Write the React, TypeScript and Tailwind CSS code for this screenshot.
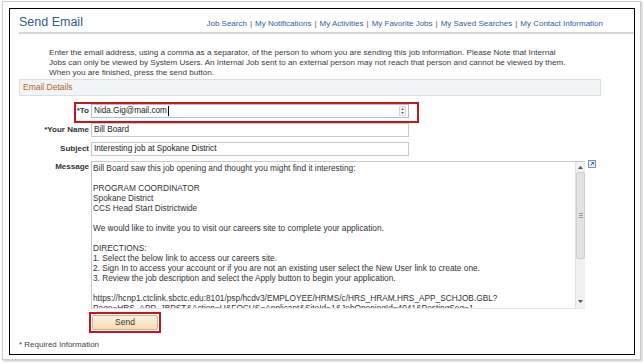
const links = [
  "Job Search",
  "My Notifications",
  "My Activities",
  "My Favorite Jobs",
  "My Saved Searches",
  "My Contact Information",
];

const message = `Bill Board saw this job opening and thought you might find it interesting:

PROGRAM COORDINATOR
Spokane District
CCS Head Start Districtwide

We would like to invite you to visit our careers site to complete your application.

DIRECTIONS:
1. Select the below link to access our careers site.
2. Sign In to access your account or if you are not an existing user select the New User link to create one.
3. Review the job description and select the Apply button to begin your application.

https://hcnp1.ctclink.sbctc.edu:8101/psp/hcdv3/EMPLOYEE/HRMS/c/HRS_HRAM.HRS_APP_SCHJOB.GBL?
Page=HRS_APP_JBPST&Action=U&FOCUS=Applicant&SiteId=1&JobOpeningId=4041&PostingSeq=1`;

const Label = ({ children }: { children: React.ReactNode }) => (
  <div className="text-right text-[8px] font-bold text-[#333] leading-[14px]">{children}</div>
);

const App = () => {
  return (
    <div className="w-[643px] h-[364px] bg-white font-['Liberation_Sans',Arial,sans-serif] overflow-hidden">
      <div className="ml-[2px] mt-[1px] w-[639px] h-[359px] border border-[#cdcdcd] shadow-[1px_1px_2px_rgba(0,0,0,0.25)] pl-[6px] pt-[6px]">
        <div className="w-[626px] h-[347px] border border-black">
          {/* header */}
          <div className="ml-[9px] h-[25px] pt-[6px] flex items-baseline justify-between pr-[31px] border-b-2 border-[#d6d6d6]">
            <h1 className="text-[12.5px] leading-[15px] text-[#36598f]">Send Email</h1>
            <div className="text-[8px] text-[#2f5ea8] flex items-baseline">
              {links.map((l, i) => (
                <span key={l}>
                  {i > 0 && <span className="mx-[3px] text-[#555]">|</span>}
                  {l}
                </span>
              ))}
            </div>
          </div>

          {/* intro */}
          <p className="mt-[14px] pl-[39px] pr-[62px] text-[8.1px] leading-[10px] text-[#3a3a3a]">
            Enter the email address, using a comma as a separator, of the person to whom you are sending this job
            information. Please Note that Internal Jobs can only be viewed by System Users. An Internal Job sent to an
            external person may not reach that person and cannot be viewed by them. When you are finished, press the
            send button.
          </p>

          {/* section bar */}
          <div className="mt-[1px] ml-[9px] w-[582px] h-[17px] bg-[#f2f4f5] border border-[#dadfe2] pl-[3px] text-[8.5px] leading-[15px] text-[#b5672c]">
            Email Details
          </div>

          {/* form */}
          <div className="ml-[9px] mt-[8px] grid grid-cols-[70px_auto] gap-x-[2px] gap-y-[5px]">
            <Label>*To</Label>
            <div className="relative w-[318px] h-[14px] border border-[#a9bfd6] bg-white flex items-center pl-[2px] text-[8.2px] text-[#222]">
              Nida.Gig@mail.com
              <span className="w-px h-[10px] bg-black ml-px" />
              <svg className="absolute right-[2px] top-[1px]" width="7" height="10" viewBox="0 0 7 10">
                <rect x="0.5" y="0.5" width="6" height="9" fill="#f4f4f4" stroke="#d6d6d6" />
                <path d="M2 4 L3.5 2 L5 4 Z M2 6 L3.5 8 L5 6 Z" fill="#666" />
              </svg>
              <div className="absolute top-[-3px] left-[-18px] w-[345px] h-[21px] border-2 border-[#c4161c] pointer-events-none" />
            </div>

            <Label>*Your Name</Label>
            <div className="w-[318px] h-[14px] border border-[#c9c9c9] bg-white pl-[2px] text-[8.2px] leading-[12px] text-[#222]">
              Bill Board
            </div>

            <Label>Subject</Label>
            <div className="w-[318px] h-[14px] border border-[#c9c9c9] bg-white pl-[2px] text-[8.2px] leading-[12px] text-[#222]">
              Interesting job at Spokane District
            </div>

            <div className="text-right text-[8px] font-bold text-[#333] leading-[10px] pt-[1px]">Message</div>
            <div className="flex items-start gap-[3px]">
              <div className="w-[494px] h-[148px] border border-[#c9c9c9] border-r-0 border-b-[#e6e6e6] bg-white flex overflow-hidden">
                <div className="flex-1 pl-[1px] pt-px whitespace-pre-line text-[8.3px] leading-[10px] text-[#333] overflow-hidden">
                  {message}
                </div>
                <div className="w-[10px] h-full bg-[#f1f1f1] border-l border-[#e2e2e2] flex flex-col items-center">
                  <svg className="mt-[4px]" width="5" height="3" viewBox="0 0 5 3">
                    <path d="M0 3 L2.5 0 L5 3 Z" fill="#555" />
                  </svg>
                  <div className="mt-[3px] w-[9px] h-[87px] rounded-[2px] bg-[#e3e3e3] border border-[#cfcfcf] flex items-center justify-center">
                    <div className="flex flex-col gap-px">
                      <span className="block w-[4px] h-px bg-[#999]" />
                      <span className="block w-[4px] h-px bg-[#999]" />
                      <span className="block w-[4px] h-px bg-[#999]" />
                    </div>
                  </div>
                  <svg className="mt-auto mb-[5px]" width="5" height="3" viewBox="0 0 5 3">
                    <path d="M0 0 L2.5 3 L5 0 Z" fill="#555" />
                  </svg>
                </div>
              </div>
              <svg className="-mt-px" width="8" height="8" viewBox="0 0 8 8">
                <rect x="0.5" y="0.5" width="7" height="7" fill="#e8eef6" stroke="#7b93b6" />
                <path d="M2.5 5.5 L5.5 2.5 M3.5 2.5 H5.5 V4.5" stroke="#4a6a98" strokeWidth="1" fill="none" />
              </svg>
            </div>

            <div />
            <div className="pt-[1px] pl-[1px] flex">
              <button className="relative block w-[66px] h-[15px] rounded-[2px] border border-[#d7b88a] bg-gradient-to-b from-[#fdf3e2] to-[#f7dcb2] text-[8.5px] leading-[13px] text-[#333]">
                Send
                <span className="absolute -inset-[4px] border-2 border-[#c4161c] pointer-events-none" />
              </button>
            </div>
          </div>

          <div className="ml-[9px] mt-[10px] text-[8px] leading-[10px] text-[#444]">* Required Information</div>
        </div>
      </div>
    </div>
  );
};

export default App;
